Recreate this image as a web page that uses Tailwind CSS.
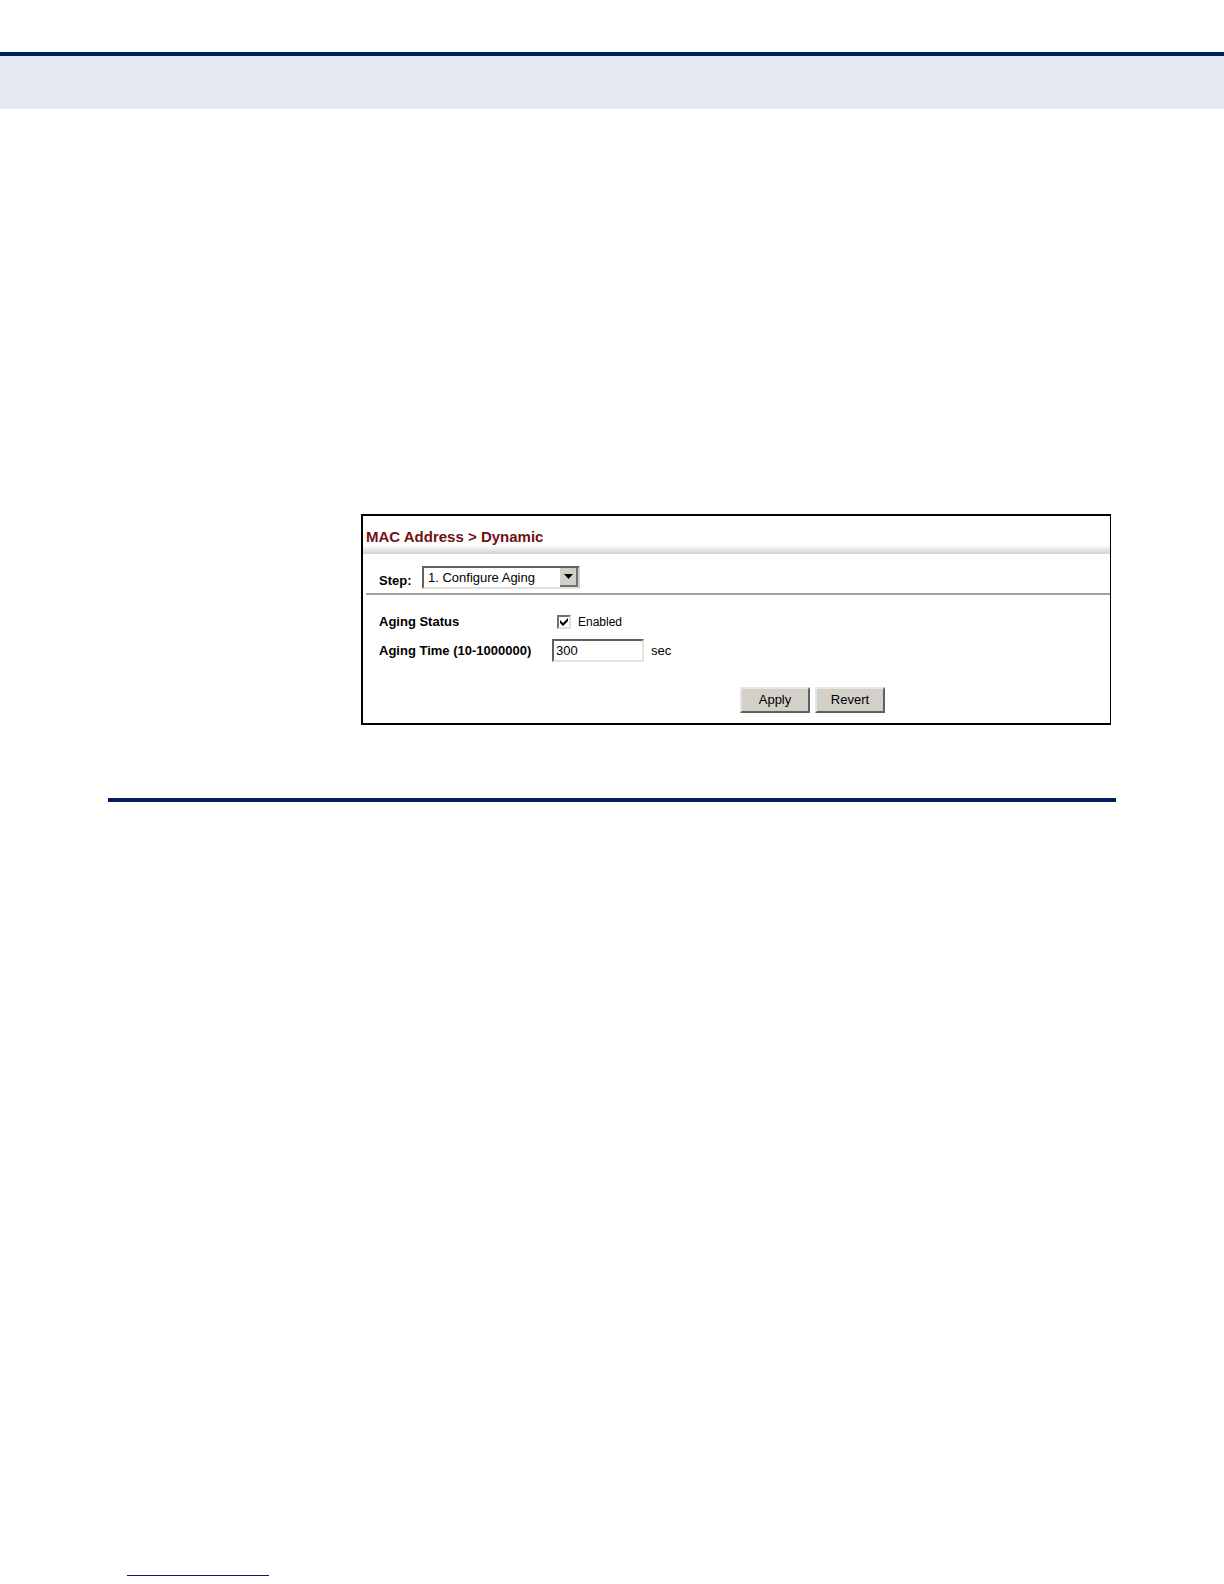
<!DOCTYPE html>
<html lang="en">
  <head>
    <meta charset="UTF-8" />
    <meta name="viewport" content="width=device-width, initial-scale=1.0" />
    <title>MAC Address &gt; Dynamic</title>
    <script src="https://cdn.jsdelivr.net/npm/@tailwindcss/browser@4"></script>
  </head>
  <body class="flex min-h-screen flex-col bg-white pt-[52px] font-['Liberation_Sans',Arial,sans-serif] text-[13px] text-black">
    <header class="h-[57px] border-t-4 border-[#00205f] bg-[#e5e8f0]"></header>

    <main class="mx-[108px] mt-[405px]">
      <section class="mr-[5px] ml-[253px] border-2 border-r border-black bg-white">
        <h1 class="h-[29px] pl-[3px] text-[15px] leading-[41px] font-bold text-[#701014]">MAC Address &gt; Dynamic</h1>
        <div class="h-[9px] bg-linear-to-b from-white to-[#d2d2d2]"></div>

        <form onsubmit="return false">
          <div class="ml-[3px] flex border-b-2 border-[#a0a0a0] pt-3 pb-1 pl-[13px]">
            <label for="step" class="h-[23px] w-[43px] leading-[30px] font-bold">Step:</label>
            <div class="relative h-[23px] w-[158px]">
              <select id="step" class="h-full w-full appearance-none border-2 border-t-[#606060] border-r-[#d4d0c8] border-b-[#e4e2dc] border-l-[#606060] bg-white pl-1 outline-none">
                <option>1. Configure Aging</option>
              </select>
              <span class="pointer-events-none absolute top-0.5 right-0.5 flex h-[19px] w-[18px] items-center justify-center border-r-2 border-b-2 border-[#707070] bg-[#d2d0c8]">
                <svg class="h-[5px] w-[9px]" viewBox="0 0 9 5"><path d="M0 0h9L4.500 5z" /></svg>
              </span>
            </div>
          </div>

          <div class="flex flex-col gap-1.5 pt-[15px] pl-4">
            <div class="flex h-[23px] items-center">
              <label for="aging-status" class="w-[178px] font-bold">Aging Status</label>
              <span class="relative h-[14px] w-[14px]">
                <input type="checkbox" id="aging-status" checked class="peer block h-full w-full appearance-none border-2 border-t-[#707070] border-r-[#e4e2dc] border-b-[#e4e2dc] border-l-[#707070] bg-white" />
                <svg class="pointer-events-none absolute inset-0 hidden h-full w-full peer-checked:block" viewBox="0 0 14 14"><path d="M3 5l3 3 5-5v3l-5 5-3-3z" /></svg>
              </span>
              <label for="aging-status" class="pl-[7px] text-xs">Enabled</label>
            </div>
            <div class="flex h-[23px] items-center">
              <label for="aging-time" class="w-[173px] font-bold">Aging Time (10-1000000)</label>
              <input type="text" id="aging-time" value="300" class="h-full w-[92px] border-2 border-t-[#606060] border-r-[#e4e2dc] border-b-[#e4e2dc] border-l-[#606060] bg-white pl-0.5 outline-none" />
              <label for="aging-time" class="pl-[7px]">sec</label>
            </div>
          </div>

          <div class="flex gap-[5px] pt-[25px] pb-2.5 pl-[377px]">
            <button type="submit" class="h-[26px] w-[70px] border-2 border-t-[#e8e6e0] border-r-[#606060] border-b-[#606060] border-l-[#e8e6e0] bg-[#d2d0c8]">Apply</button>
            <button type="reset" class="h-[26px] w-[70px] border-2 border-t-[#e8e6e0] border-r-[#606060] border-b-[#606060] border-l-[#e8e6e0] bg-[#d2d0c8]">Revert</button>
          </div>
        </form>
      </section>

      <hr class="mt-[73px] border-t-4 border-[#00205f]" />
    </main>

    <footer class="mt-auto pb-2 pl-[127px]">
      <hr class="w-[142px] border-t border-[#10108a]" />
    </footer>
  </body>
</html>
